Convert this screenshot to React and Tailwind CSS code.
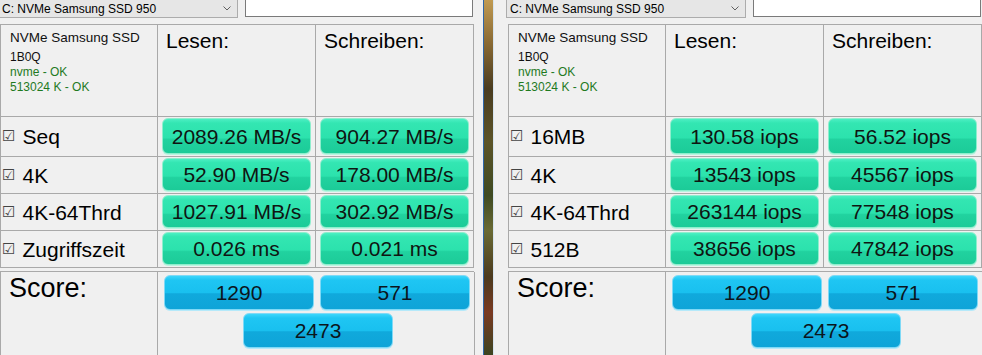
import React from 'react';

const leftRows = [
  ['Seq', '2089.26 MB/s', '904.27 MB/s'],
  ['4K', '52.90 MB/s', '178.00 MB/s'],
  ['4K-64Thrd', '1027.91 MB/s', '302.92 MB/s'],
  ['Zugriffszeit', '0.026 ms', '0.021 ms'],
];

const rightRows = [
  ['16MB', '130.58 iops', '56.52 iops'],
  ['4K', '13543 iops', '45567 iops'],
  ['4K-64Thrd', '263144 iops', '77548 iops'],
  ['512B', '38656 iops', '47842 iops'],
];

const GreenBar = ({ children }) => (
  <div className="flex h-full w-full items-center justify-center rounded-[6px] border border-[#8eeecd] bg-[linear-gradient(to_bottom,#4cefc3_0%,#33e6b2_12%,#2ce2ad_55%,#21d29f_60%,#1ccb98_100%)] text-[21px] leading-none text-[#0f1512] shadow-[0_1px_0_#b8f5e0]">
    {children}
  </div>
);

const BlueBar = ({ children }) => (
  <div className="flex h-[35px] w-[150px] items-center justify-center rounded-[6px] border border-[#7fd9f6] bg-[linear-gradient(to_bottom,#3dd6fb_0%,#1fc6f3_12%,#19c0ef_50%,#10a9dc_54%,#0ea4d8_100%)] text-[21px] leading-none text-[#0b161d] shadow-[0_1px_0_#b5e9fa]">
    {children}
  </div>
);

const Panel = ({ rows }) => (
  <div className="w-[474px] shrink-0">
    <div className="flex h-[24px] items-start">
      <div className="-ml-[2px] flex h-[18px] w-[240px] shrink-0 items-center justify-between border border-t-0 border-[#acacac] bg-[#e6e6e6] pl-[3px] pr-[6px] text-[12px] text-black">
        <span>C: NVMe Samsung SSD 950</span>
        <svg width="8" height="5" viewBox="0 0 8 5" fill="none" stroke="#606060" strokeWidth="1">
          <path d="M0.5 0.5 L4 4 L7.5 0.5" />
        </svg>
      </div>
      <div className="ml-[7px] h-[17px] w-[228px] shrink-0 border border-t-0 border-[#7a7a7a] bg-white" />
    </div>

    <div className="grid grid-cols-[157px_158px_158px] border-l border-t border-[#a9a9a9]">
      <div className="h-[92px] border-b border-r border-[#a9a9a9] pl-[9px] pt-[5px] text-[12px] leading-[15px]">
        <div className="mb-[5px] text-[13.5px] text-[#111]">NVMe Samsung SSD</div>
        <div className="text-[#111]">1B0Q</div>
        <div className="text-[#1f7a1f]">nvme - OK</div>
        <div className="text-[#1f7a1f]">513024 K - OK</div>
      </div>
      <div className="h-[92px] border-b border-r border-[#a9a9a9] pl-[8px] pt-[5px] text-[21px] leading-none text-black">
        Lesen:
      </div>
      <div className="h-[92px] border-b border-r border-[#a9a9a9] pl-[8px] pt-[5px] text-[21px] leading-none text-black">
        Schreiben:
      </div>

      {rows.map(([label, read, write], i) => {
        const h = i === 0 ? 'h-[40px]' : 'h-[37px]';
        return (
          <React.Fragment key={label}>
            <div className={`${h} flex items-center border-b border-r border-[#a9a9a9] pl-[1px] text-[21px] leading-none text-black`}>
              <span className="mr-[7px] font-['DejaVu_Sans',sans-serif] text-[15px] text-[#444]">☑</span>
              {label}
            </div>
            <div className={`${h} border-b border-r border-[#a9a9a9] px-[4px] pb-[2px] pt-[1px]`}>
              <GreenBar>{read}</GreenBar>
            </div>
            <div className={`${h} border-b border-r border-[#a9a9a9] px-[4px] pb-[2px] pt-[1px]`}>
              <GreenBar>{write}</GreenBar>
            </div>
          </React.Fragment>
        );
      })}
    </div>

    <div className="mt-[3px] grid h-[90px] grid-cols-[157px_317px] border-l border-t border-[#a9a9a9]">
      <div className="border-r border-[#a9a9a9] pl-[8px] pt-[3px] text-[27px] leading-none text-black">Score:</div>
      <div className="flex flex-col gap-[3px] border-r border-[#a9a9a9] pl-[6px] pt-[3px]">
        <div className="flex gap-[6px]">
          <BlueBar>1290</BlueBar>
          <BlueBar>571</BlueBar>
        </div>
        <div className="flex justify-center pr-[2px]">
          <BlueBar>2473</BlueBar>
        </div>
      </div>
    </div>
  </div>
);

export default function App() {
  return (
    <div className="flex h-[355px] w-[982px] overflow-hidden bg-[#f0f0f0] font-['Liberation_Sans',Arial,sans-serif]">
      <Panel rows={leftRows} />
      <div className="flex h-full w-[34px] shrink-0">
        <div className="w-[9px]" />
        <div className="w-px bg-[#2f66a8]" />
        <div className="w-[9px] bg-[linear-gradient(to_bottom,#c09a52_0%,#8a6a34_12%,#4a3c20_25%,#5c5428_40%,#3f4a22_55%,#6a6a34_65%,#4c3a1e_78%,#7a3a22_88%,#3c4420_100%)]" />
        <div className="w-px bg-[#d6e4f0]" />
        <div className="w-[14px]" />
      </div>
      <Panel rows={rightRows} />
    </div>
  );
}
